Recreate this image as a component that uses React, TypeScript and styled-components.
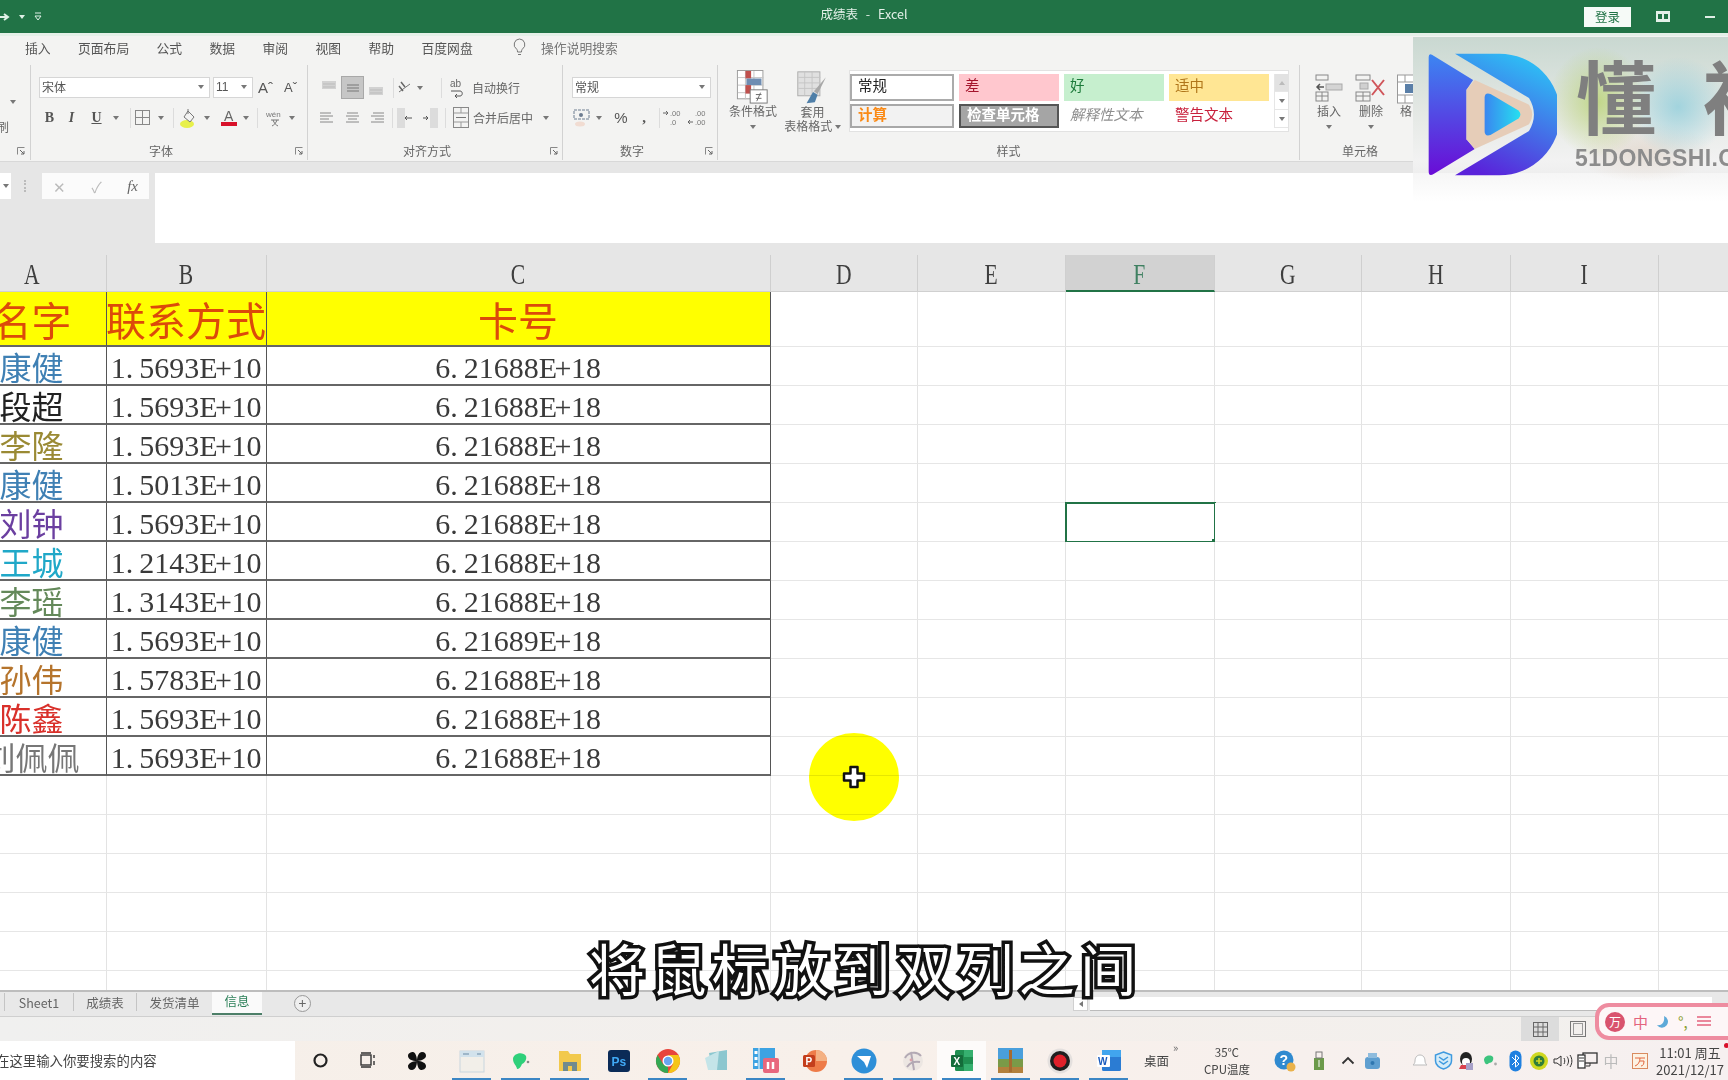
import React from "react";
import styled, { createGlobalStyle } from "styled-components";

const Global = createGlobalStyle`
  html, body { margin: 0; padding: 0; background: #fff; }
  * { box-sizing: border-box; }
`;

const UI = `"Noto Sans CJK SC", "Liberation Sans", sans-serif`;
const COLS = "149px 160px 504px 147px 148px 149px 147px 149px 148px 148px";

const Root = styled.div`
  position: relative;
  width: 1728px;
  height: 1080px;
  overflow: hidden;
  display: flex;
  flex-direction: column;
  font-family: ${UI};
  color: #555;
  filter: blur(0.45px);
`;

/* ---------- title bar ---------- */
const TitleBar = styled.header`
  height: 36px;
  flex: none;
  background: #217346;
  border-bottom: 3px solid #e4f0e8;
  display: grid;
  grid-template-columns: 1fr auto 1fr;
  align-items: center;
  color: #e4f1e9;
`;
const Quick = styled.div`
  display: flex;
  align-items: center;
  gap: 9px;
  padding-left: 0;
`;
const Title = styled.div`
  font-size: 12.5px;
  word-spacing: 5px;
  margin-bottom: 6px;
`;
const TitleRight = styled.div`
  display: flex;
  align-items: center;
  justify-content: flex-end;
  padding-right: 13px;
`;
const Login = styled.div`
  width: 47px;
  height: 20px;
  background: #f6faf7;
  color: #217346;
  font-size: 12.5px;
  display: flex;
  align-items: center;
  justify-content: center;
  margin-right: 25px;
`;
const Minimize = styled.span`
  width: 10px;
  height: 2px;
  background: #dfeee5;
  margin-left: 35px;
`;

/* ---------- menu ---------- */
const MenuRow = styled.nav`
  height: 29px;
  flex: none;
  background: #f3f3f2;
  display: flex;
  align-items: center;
  gap: 27.4px;
  padding: 0 0 7px 25px;
  font-size: 12.8px;
  color: #555;
`;
const Search = styled.div`
  display: flex;
  align-items: center;
  gap: 15px;
  margin-left: 13px;
  font-size: 12.8px;
  color: #777;
`;

/* ---------- ribbon ---------- */
const Ribbon = styled.section`
  height: 97px;
  flex: none;
  background: #f3f3f2;
  display: flex;
  border-bottom: 1px solid #d8d8d8;
`;
const Group = styled.div<{ $w: number; $pad?: number; $line?: boolean }>`
  width: ${(p) => p.$w}px;
  flex: none;
  padding: 12px 0 0 ${(p) => p.$pad ?? 8}px;
  border-right: ${(p) => (p.$line === false ? "none" : "1px solid #d2d2d2")};
  margin-bottom: 1px;
  display: flex;
  flex-direction: column;
  overflow: hidden;
`;
const Line = styled.div<{ $top?: number }>`
  display: flex;
  align-items: center;
  height: 21px;
  margin-top: ${(p) => p.$top ?? 0}px;
`;
const GroupFoot = styled.div<{ $pad?: number }>`
  margin-top: auto;
  margin-left: -${(p) => p.$pad ?? 8}px;
  height: 19px;
  display: flex;
  align-items: center;
  font-size: 12px;
  color: #666;
`;
const GroupLabel = styled.div`
  flex: 1;
  text-align: center;
`;
const Launcher = styled.span`
  width: 16px;
  display: flex;
  justify-content: center;
`;
const DropBox = styled.div<{ $w: number }>`
  width: ${(p) => p.$w}px;
  height: 21px;
  flex: none;
  background: #fff;
  border: 1px solid #d6d6d6;
  display: flex;
  align-items: center;
  justify-content: space-between;
  padding: 0 5px 2px 2px;
  font-size: 12px;
  color: #555;
`;
const Tool = styled.div<{ $w: number; $ml?: number; $on?: boolean }>`
  width: ${(p) => p.$w}px;
  height: ${(p) => (p.$on ? "23px" : "21px")};
  margin-left: ${(p) => p.$ml ?? 0}px;
  flex: none;
  display: flex;
  align-items: center;
  justify-content: center;
  font-size: 13px;
  color: #666;
  background: ${(p) => (p.$on ? "#c6c6c6" : "transparent")};
  border: ${(p) => (p.$on ? "1px solid #a8a8a8" : "none")};
`;
const Face = styled.span<{ $italic?: boolean; $under?: boolean }>`
  font-family: "Liberation Serif", serif;
  font-weight: 700;
  font-size: 14px;
  font-style: ${(p) => (p.$italic ? "italic" : "normal")};
  text-decoration: ${(p) => (p.$under ? "underline" : "none")};
  color: #555;
`;
const Sep = styled.span<{ $ml: number }>`
  width: 1px;
  height: 20px;
  background: #dcdcdc;
  margin-left: ${(p) => p.$ml}px;
  flex: none;
`;
const ToolText = styled.span<{ $ml?: number }>`
  font-size: 12px;
  color: #666;
  margin-left: ${(p) => p.$ml ?? 1}px;
  white-space: nowrap;
`;
const Caret = styled.span<{ $ml?: number }>`
  flex: none;
  width: 0;
  height: 0;
  margin-left: ${(p) => p.$ml ?? 0}px;
  border-left: 3px solid transparent;
  border-right: 3px solid transparent;
  border-top: 4px solid #777;
`;
const StylesBody = styled.div<{ $top?: number }>`
  display: flex;
  align-items: flex-start;
  margin-top: ${(p) => p.$top ?? -7}px;
`;
const BigTool = styled.div<{ $w: number }>`
  width: ${(p) => p.$w}px;
  flex: none;
  display: flex;
  flex-direction: column;
  align-items: center;
  font-size: 12px;
  line-height: 14px;
  color: #666;
  white-space: nowrap;
`;
const BigLabel = styled.span<{ $top: number }>`
  margin-top: ${(p) => p.$top}px;
`;
const BigCaret = styled.div`
  margin-top: 7px;
  display: flex;
  justify-content: center;
`;
const Gallery = styled.div`
  width: 440px;
  height: 62px;
  flex: none;
  background: #fff;
  border: 1px solid #e2e2e2;
  padding: 3px 0 3px 0;
  display: grid;
  grid-template-columns: 104px 100px 100px 100px 14px;
  grid-template-rows: 27px 24px;
  column-gap: 5px;
  row-gap: 3px;
  margin-left: 2px;
`;
const StyleCell = styled.div<{ $bg?: string; $fg: string; $edge?: string; $i?: boolean; $b?: boolean }>`
  background: ${(p) => p.$bg ?? "transparent"};
  color: ${(p) => p.$fg};
  border: ${(p) => p.$edge ?? "none"};
  font-size: 14.5px;
  font-style: ${(p) => (p.$i ? "italic" : "normal")};
  font-weight: ${(p) => (p.$b ? 700 : 400)};
  display: flex;
  align-items: center;
  padding: 0 0 6px 6px;
  white-space: nowrap;
  overflow: hidden;
`;
const GalleryScroll = styled.div`
  grid-column: 5;
  grid-row: 1 / span 2;
  display: flex;
  flex-direction: column;
  border-left: 1px solid #e6e6e6;
`;
const ScrollBtn = styled.div<{ $top?: boolean }>`
  flex: 1;
  display: flex;
  align-items: center;
  justify-content: center;
  background: ${(p) => (p.$top ? "#e2e2e2" : "#fff")};
  border-bottom: 1px solid #e6e6e6;
`;

/* ---------- formula bar ---------- */
const FormulaBar = styled.section`
  height: 93px;
  flex: none;
  background: #e6e6e6;
  padding: 11px 0 11px 0;
  display: flex;
  align-items: flex-start;
`;
const NameStub = styled.div`
  width: 11px;
  height: 26px;
  background: #fff;
  display: flex;
  align-items: center;
  justify-content: center;
`;
const Dots = styled.span`
  margin-left: 13px;
  width: 2px;
  height: 12px;
  margin-top: 7px;
  border-left: 2px dotted #bbb;
`;
const FxBox = styled.div`
  margin-left: 16px;
  width: 107px;
  height: 26px;
  background: #fbfbfb;
  display: flex;
  align-items: center;
  justify-content: space-between;
  padding: 0 11px 0 11px;
  color: #bbb;
  font-size: 15px;
`;
const Fx = styled.i`
  font-family: "Liberation Serif", serif;
  color: #666;
  font-size: 15px;
`;
const FormulaInput = styled.div`
  margin-left: 6px;
  flex: 1;
  height: 70px;
  background: #fff;
`;

/* ---------- sheet ---------- */
const ColumnHead = styled.div`
  height: 37px;
  flex: none;
  margin-left: -42.5px;
  display: grid;
  grid-template-columns: ${COLS};
  background: #e6e6e6;
`;
const ColCell = styled.div<{ $on?: boolean }>`
  display: flex;
  align-items: center;
  justify-content: center;
  padding-top: 2px;
  font-family: "Liberation Serif", serif;
  font-size: 30px;
  line-height: 1;
  color: ${(p) => (p.$on ? "#3f8061" : "#3e3e3e")};
  background: ${(p) => (p.$on ? "#d2d2d2" : "transparent")};
  border-right: 1px solid #cfcfcf;
  border-bottom: ${(p) => (p.$on ? "2px solid #217346" : "1px solid #d0d0d0")};
`;
const ColLetter = styled.span`
  display: inline-block;
  transform: scaleX(0.72);
`;
const Sheet = styled.div`
  flex: 1;
  min-height: 0;
  overflow: hidden;
  margin-left: -42.5px;
  display: grid;
  grid-template-columns: ${COLS};
  grid-template-rows: 55px;
  grid-auto-rows: 39px;
  background: #fff;
`;
const Cell = styled.div<{ $boxed?: boolean; $head?: boolean; $sel?: boolean }>`
  position: relative;
  display: flex;
  align-items: center;
  justify-content: center;
  white-space: nowrap;
  background: ${(p) => (p.$head ? "#ffff00" : "#fff")};
  border-right: ${(p) => (p.$boxed ? "1.5px solid #555" : "1px solid #e3e3e3")};
  border-bottom: ${(p) => (p.$boxed ? "2px solid #666" : "1px solid #e6e6e6")};
  outline: ${(p) => (p.$sel ? "2px solid #217346" : "none")};
  outline-offset: -1px;
  &::after {
    content: ${(p) => (p.$sel ? '""' : "none")};
    position: absolute;
    right: -3px;
    bottom: -3px;
    width: 5px;
    height: 5px;
    background: #217346;
  }
`;
const HeadText = styled.span`
  font-size: 40px;
  line-height: 1;
  color: #dc4a0a;
`;
const NameText = styled.span<{ $c: string }>`
  font-size: 32px;
  line-height: 1;
  color: ${(p) => p.$c};
`;
const NumText = styled.span`
  font-family: "Liberation Serif", serif;
  font-size: 30px;
  line-height: 1;
  color: #3a3a3a;
  margin-top: 4px;
`;
const NumDot = styled.span`
  padding-right: 6px;
`;
const NumExp = styled.span`
  letter-spacing: -2.5px;
  padding-right: 2px;
`;

/* ---------- tabs / status ---------- */
const TabBar = styled.div`
  height: 26px;
  flex: none;
  background: #e8e8e8;
  border-top: 2px solid #bdbdbd;
  display: flex;
  align-items: center;
  font-size: 12.5px;
  color: #666;
`;
const Tab = styled.div<{ $w: number; $on?: boolean; $first?: boolean }>`
  width: ${(p) => p.$w}px;
  flex: none;
  height: ${(p) => (p.$on ? "23px" : "18px")};
  margin-left: ${(p) => (p.$first ? "4px" : "0")};
  margin-top: ${(p) => (p.$on ? "0" : "-4px")};
  padding-bottom: ${(p) => (p.$on ? "4px" : "0")};
  align-self: ${(p) => (p.$on ? "flex-start" : "center")};
  display: flex;
  align-items: center;
  justify-content: center;
  white-space: nowrap;
  background: ${(p) => (p.$on ? "#fafafa" : "transparent")};
  color: ${(p) => (p.$on ? "#2c8059" : "#666")};
  border-bottom: ${(p) => (p.$on ? "2px solid #4d7f68" : "none")};
  border-left: ${(p) => (p.$on ? "none" : "1px solid #c4c4c4")};
`;
const PlusBtn = styled.span`
  margin: -2px 0 0 32px;
  width: 17px;
  height: 17px;
  border-radius: 50%;
  border: 1px solid #999;
  display: flex;
  align-items: center;
  justify-content: center;
  font-size: 14px;
  line-height: 1;
  color: #666;
  background: #efefef;
`;
const HScroll = styled.div`
  margin-left: auto;
  width: 639px;
  margin-right: 16px;
  display: flex;
  align-items: center;
  height: 14px;
  gap: 2px;
`;
const HArrow = styled.div`
  width: 15px;
  height: 14px;
  background: #fff;
  display: flex;
  align-items: center;
  justify-content: center;
  border: 1px solid #d0d0d0;
`;
const HTrack = styled.div`
  flex: 1;
  height: 14px;
  background: #fff;
  border-bottom: 1px solid #bbb;
`;
const StatusBar = styled.div`
  height: 25px;
  flex: none;
  background: linear-gradient(90deg, #f0f0ef 0%, #f4efeb 60%, #f2f0ee 100%);
  border-top: 1px solid #cfcfcf;
  display: flex;
  justify-content: flex-end;
  padding-right: 131px;
`;
const ViewBtn = styled.div<{ $on?: boolean }>`
  width: 38px;
  height: 24px;
  display: flex;
  align-items: center;
  justify-content: center;
  background: ${(p) => (p.$on ? "#dcdcdc" : "transparent")};
`;

/* ---------- taskbar ---------- */
const Taskbar = styled.footer`
  height: 39px;
  flex: none;
  display: flex;
  align-items: stretch;
  background: linear-gradient(90deg, #f5efe9 0%, #f8f0ea 50%, #f6f0f0 100%);
  overflow: hidden;
`;
const SearchBox = styled.div`
  width: 295px;
  flex: none;
  background: #fff;
  display: flex;
  align-items: center;
  padding-bottom: 2px;
  font-size: 13.4px;
  color: #444;
  overflow: hidden;
  white-space: nowrap;
  margin-right: 1px;
`;
const SearchText = styled.span`
  margin-left: -4px;
`;
const AppCell = styled.div<{ $w?: number; $active?: boolean; $front?: boolean; $mr?: number }>`
  position: relative;
  width: ${(p) => p.$w ?? 49}px;
  margin-right: ${(p) => p.$mr ?? 0}px;
  flex: none;
  display: flex;
  align-items: center;
  justify-content: center;
  background: ${(p) => (p.$front ? "#fdfbfa" : "transparent")};
  &::after {
    content: ${(p) => (p.$active ? '""' : "none")};
    position: absolute;
    left: 5px;
    right: 5px;
    bottom: 0;
    height: 2px;
    background: #3b86c4;
  }
`;
const TrayText = styled.div<{ $w: number; $size?: number; $ml?: number }>`
  width: ${(p) => p.$w}px;
  margin-left: ${(p) => p.$ml ?? 0}px;
  flex: none;
  display: flex;
  flex-direction: column;
  align-items: center;
  justify-content: center;
  font-size: ${(p) => p.$size ?? 12}px;
  line-height: 17px;
  color: #444;
  white-space: nowrap;
`;
const Tray = styled.div<{ $w: number; $ml?: number; $muted?: boolean }>`
  width: ${(p) => p.$w}px;
  margin-left: ${(p) => p.$ml ?? 0}px;
  flex: none;
  display: flex;
  align-items: center;
  justify-content: center;
  color: ${(p) => (p.$muted ? "#bbb" : "#555")};
  font-size: 15px;
`;
const More = styled.span`
  font-size: 11px;
  color: #666;
  width: 16px;
  padding-top: 1px;
  margin-left: -7px;
  line-height: 1;
`;

/* ---------- overlays ---------- */
const Watermark = styled.div`
  position: absolute;
  top: 37px;
  left: 1413px;
  width: 315px;
  height: 165px;
  overflow: hidden;
  background:
    radial-gradient(ellipse 50px 55px at 185px 65px, rgba(185, 210, 115, 0.8), transparent),
    radial-gradient(ellipse 50px 50px at 265px 70px, rgba(140, 205, 220, 0.75), transparent),
    radial-gradient(ellipse 70px 30px at 230px 115px, rgba(225, 212, 200, 0.7), transparent),
    linear-gradient(180deg, #c9d8d1 0%, #e4e8e4 45%, #f2f2f2 75%, rgba(255, 255, 255, 0) 100%);
`;
const LogoWrap = styled.div`
  position: absolute;
  left: 14px;
  top: 15px;
`;
const WmTitle = styled.div`
  position: absolute;
  left: 163px;
  top: 6px;
  font-size: 80px;
  font-weight: 700;
  line-height: 100px;
  letter-spacing: 46px;
  color: #7f7f7f;
  white-space: nowrap;
`;
const WmSite = styled.div`
  position: absolute;
  left: 162px;
  top: 108px;
  font-family: "Liberation Sans", sans-serif;
  font-weight: 700;
  font-size: 23px;
  letter-spacing: 0.4px;
  color: #8c8c8c;
  white-space: nowrap;
`;
const Caption = styled.div`
  position: absolute;
  left: 589px;
  top: 926px;
  font-size: 56px;
  line-height: 82px;
  letter-spacing: 5.4px;
  color: #fff;
  -webkit-text-stroke: 7px #111;
  paint-order: stroke fill;
  white-space: nowrap;
`;
const Pointer = styled.div`
  position: absolute;
  left: 809px;
  top: 733px;
  width: 90px;
  height: 88px;
  border-radius: 50%;
  background: #ffff00;
  mix-blend-mode: multiply;
`;
const Cursor = styled.div`
  position: absolute;
  left: 842px;
  top: 765px;
  width: 24px;
  height: 24px;
`;
const ImePill = styled.div`
  position: absolute;
  left: 1595px;
  top: 1003px;
  width: 150px;
  height: 37px;
  border-radius: 14px;
  background: #fdf6f7;
  border: 4px solid #ee8ca0;
  display: flex;
  align-items: center;
  gap: 8px;
  padding-left: 6px;
  color: #e4637d;
  font-size: 15px;
`;
const ImeLogo = styled.span`
  width: 20px;
  height: 20px;
  border-radius: 50%;
  background: #d9536e;
  color: #fff;
  font-size: 12px;
  display: flex;
  align-items: center;
  justify-content: center;
`;
const ImeMark = styled.span`
  color: #8aa030;
`;
const RedDot = styled.span`
  position: absolute;
  left: 1724px;
  top: 1043px;
  width: 5px;
  height: 5px;
  border-radius: 50%;
  background: #d8112a;
`;

/* ---------- icons ---------- */
const Svg: React.FC<{ w: number; h?: number; v?: string; children: React.ReactNode }> = ({ w, h, v, children }) => (
  <svg width={w} height={h ?? w} viewBox={v ?? `0 0 ${w} ${h ?? w}`} fill="none" style={{ display: "block" }}>
    {children}
  </svg>
);
const LaunchIcon = () => (
  <Svg w={8}>
    <path d="M.5 7.5v-7h7" stroke="#888" />
    <path d="M3 3l4 4M4 7h3V4" stroke="#666" />
  </Svg>
);
const Bars = ({ y, sel }: { y: number; sel?: boolean }) => (
  <Svg w={16}>
    {sel ? (
      <path d="M2 5h12M2 8h12M2 11h12" stroke="#777" />
    ) : (
      <rect x="1" y={y} width="14" height="8" fill="#d2d2d2" />
    )}
    {!sel && <path d={`M2 ${y + 3}h12M2 ${y + 6}h12`} stroke="#bbb" />}
  </Svg>
);
const AlignIcon = ({ k }: { k: "l" | "c" | "r" }) => {
  const a = k === "l" ? [1, 1, 1, 1] : k === "c" ? [2, 1, 3, 1] : [3, 1, 5, 1];
  return (
    <Svg w={15}>
      <path d={`M${a[0]} 3h11M${a[1]} 6h13M${a[2]} 9h9M${a[3]} 12h13`} stroke="#888" />
    </Svg>
  );
};
const IndentIcon = ({ flip }: { flip?: boolean }) => (
  <Svg w={17} h={20}>
    <rect x={flip ? 9 : 0} y="0" width="8" height="20" fill="#dcdcdc" />
    <path d={flip ? "M2 10h5M5 8l2 2-2 2" : "M15 10h-7M10 8l-2 2 2 2"} stroke="#555" />
  </Svg>
);
const OrientIcon = () => (
  <Svg w={18}>
    <path d="M3 13L14 5" stroke="#777" />
    <path d="M5 3l4 5M3 7l4 5" stroke="#666" strokeWidth="1.5" />
  </Svg>
);
const WrapIcon = () => (
  <Svg w={16} h={20}>
    <text x="1" y="9" fontSize="10" fill="#666" fontFamily="Liberation Sans">ab</text>
    <path d="M2 13h9c3 0 3 5 0 5H6M8 16l-2 2 2 2" stroke="#555" />
  </Svg>
);
const MergeIcon = () => (
  <Svg w={17} h={21}>
    <rect x=".5" y=".5" width="15" height="20" stroke="#888" />
    <path d="M1 6h14M1 15h14M8 1v5M8 15v5" stroke="#999" />
    <path d="M3 10.5h10" stroke="#777" />
  </Svg>
);
const BorderIcon = () => (
  <Svg w={16}>
    <rect x=".5" y=".5" width="14" height="14" stroke="#888" />
    <path d="M7.5 1v14M1 7.5h14" stroke="#888" />
  </Svg>
);
const FillIcon = () => (
  <Svg w={20}>
    <ellipse cx="7" cy="16" rx="7" ry="4" fill="#e7f04a" />
    <path d="M8 3l6 6-4 5-6-5z" fill="#f3f3f2" stroke="#777" />
    <path d="M8 1v5" stroke="#777" />
  </Svg>
);
const FontColorIcon = () => (
  <Svg w={18}>
    <text x="4" y="12" fontSize="14" fill="#666" fontFamily="Liberation Sans">A</text>
    <rect x="1" y="13" width="16" height="4" fill="#d8112a" />
  </Svg>
);
const WenIcon = () => (
  <Svg w={18}>
    <text x="0" y="8" fontSize="8" fill="#777" fontFamily="Liberation Sans">wén</text>
    <path d="M5 11h8M7 11c1 3 3 5 5 6M11 11c-1 3-3 5-5 6" stroke="#777" />
  </Svg>
);
const AccountIcon = () => (
  <Svg w={18}>
    <rect x="1" y="1" width="15" height="9" stroke="#6d7c90" strokeDasharray="3 1" />
    <circle cx="8" cy="6" r="2" fill="#6d7c90" />
    <ellipse cx="7" cy="15" rx="5" ry="2.5" fill="#f1dcd2" />
  </Svg>
);
const DecIcon = ({ more }: { more?: boolean }) => (
  <Svg w={18}>
    <text x="7" y="7" fontSize="7.5" fill="#777" fontFamily="Liberation Sans">.00</text>
    <text x="7" y="16" fontSize="7.5" fill="#777" fontFamily="Liberation Sans">{more ? ".0" : ".00"}</text>
    <path d={more ? "M0 4h5M3 2l2 2-2 2" : "M5 13H0M2 11l-2 2 2 2"} stroke="#666" />
  </Svg>
);
const CondIcon = () => (
  <Svg w={34} h={34} v="0 0 34 36">
    <rect x=".5" y=".5" width="27" height="30" fill="#fff" stroke="#9a9a9a" />
    <path d="M9 1v30M18 1v30M1 8h27M1 16h27M1 24h27" stroke="#c4c4c4" />
    <rect x="9" y="1" width="6" height="8" fill="#c0504d" />
    <rect x="10" y="9" width="16" height="7" fill="#6f8db2" />
    <rect x="9" y="16" width="6" height="9" fill="#c0504d" />
    <rect x="14" y="21" width="18" height="14" fill="#fff" stroke="#777" />
    <path d="M20 26h6M20 30h6M25 24l-4 9" stroke="#666" />
  </Svg>
);
const TableIcon = () => (
  <Svg w={34} h={35} v="0 0 34 38">
    <rect x=".5" y="2" width="24" height="26" fill="#e0e0e0" stroke="#aaa" />
    <path d="M8 2v26M16 2v26M1 8h24M1 14h24M1 20h24" stroke="#c4c4c4" />
    <path d="M31 8L22 26l-4-3z" fill="#a8a8a8" />
    <path d="M17 24l5 3-3 8-9 1z" fill="#4f7fa8" />
  </Svg>
);
const InsertIcon = () => (
  <Svg w={28} h={28}>
    <rect x="1" y="1" width="12" height="5" stroke="#888" />
    <rect x="1" y="18" width="12" height="9" stroke="#888" />
    <path d="M7 18v9M1 22h12" stroke="#888" />
    <rect x="11" y="10" width="16" height="6" fill="#d4d4d4" stroke="#aaa" />
    <path d="M9 13H2M5 10l-3 3 3 3" stroke="#555" strokeWidth="1.5" />
  </Svg>
);
const DeleteIcon = () => (
  <Svg w={32} h={28}>
    <rect x="1" y="1" width="14" height="5" stroke="#888" />
    <rect x="1" y="18" width="14" height="9" stroke="#888" />
    <path d="M8 18v9M1 22h14" stroke="#888" />
    <rect x="5" y="9" width="8" height="6" fill="#d0d0d0" stroke="#aaa" />
    <path d="M17 6l12 15M29 6L17 21" stroke="#d0555a" strokeWidth="2" />
  </Svg>
);
const FormatIcon = () => (
  <Svg w={18} h={30}>
    <rect x=".5" y="1" width="16" height="28" fill="#fff" stroke="#999" />
    <rect x="8" y="10" width="8" height="9" fill="#5a7fa8" />
    <path d="M1 8h15M1 21h15M8 1v7M8 21v8" stroke="#999" />
  </Svg>
);
const Logo = () => (
  <svg width="130" height="125" viewBox="140 150 395 380" style={{ display: "block" }}>
    <defs>
      <linearGradient id="lgA" x1="0" y1="0" x2="0" y2="1">
        <stop offset="0" stopColor="#3c86f2" />
        <stop offset="1" stopColor="#6a0cd6" />
      </linearGradient>
      <linearGradient id="lgB" x1="0.7" y1="0" x2="0.3" y2="1">
        <stop offset="0" stopColor="#2cc4f6" />
        <stop offset="1" stopColor="#5a22da" />
      </linearGradient>
      <linearGradient id="lgC" x1="0" y1="0" x2="1" y2="0">
        <stop offset="0" stopColor="#3a86f0" />
        <stop offset="1" stopColor="#26e0f0" />
      </linearGradient>
    </defs>
    <path d="M145 165q0-12 10-7L280 235l-20 30v150l25 30-125 76q-15 8-15-8z" fill="url(#lgA)" />
    <path d="M225 155h135a185 185 0 0 1 0 370H225l225-135q30-50 0-100z" fill="url(#lgB)" />
    <path d="M285 235l165 75q20 30 0 60L285 445l-25-30V265z" fill="#e6cdb8" />
    <path d="M315 290q0-18 18-12l85 50q12 12 0 24l-85 50q-18 6-18-12z" fill="url(#lgC)" />
  </svg>
);

const Ic = {
  Bird: () => (
    <Svg w={24}>
      <path d="M4 10c0-6 10-8 13-3 1 3-1 7-4 8-1 3-3 5-5 5 0-3-4-5-4-10z" fill="#2fd07a" />
      <circle cx="19" cy="13" r="1.3" fill="#888" />
    </Svg>
  ),
  Window: () => (
    <Svg w={26}>
      <rect x="1" y="3" width="24" height="21" fill="#f2efe9" stroke="#c9d6de" />
      <rect x="1" y="3" width="24" height="6" fill="#d2e2ec" />
      <path d="M4 6h6M18 6h4" stroke="#6a8aa5" />
    </Svg>
  ),
  Folder: () => (
    <Svg w={26}>
      <path d="M2 3h9l2 3h11v17H2z" fill="#f2c94c" />
      <rect x="6" y="14" width="14" height="9" fill="#6f8b8f" />
      <rect x="11" y="18" width="4" height="5" fill="#f2c94c" />
    </Svg>
  ),
  Ps: () => (
    <Svg w={24}>
      <rect x="1" y="1" width="22" height="22" rx="3" fill="#0b2b57" />
      <text x="4.5" y="17" fontSize="12" fontWeight="700" fill="#40a9f5" fontFamily="Liberation Sans">Ps</text>
    </Svg>
  ),
  Chrome: () => (
    <Svg w={26}>
      <circle cx="13" cy="13" r="12" fill="#e8453c" />
      <path d="M13 25a12 12 0 0 1-10.4-18L8 16l5 3z" fill="#34a853" />
      <path d="M13 25a12 12 0 0 0 10.4-18L13 7l5 9z" fill="#f5c518" />
      <circle cx="13" cy="13" r="5.5" fill="#fff" />
      <circle cx="13" cy="13" r="4.2" fill="#6aa6ef" />
    </Svg>
  ),
  Note: () => (
    <Svg w={26}>
      <path d="M5 5l18-3v20H8z" fill="#8cc7cf" />
      <path d="M1 10l14-7-2 19H4z" fill="#c4e4e8" />
    </Svg>
  ),
  Film: () => (
    <Svg w={28}>
      <rect x="1" y="1" width="22" height="21" fill="#3ea3e2" />
      <path d="M7 1v21" stroke="#fff" />
      <rect x="2.5" y="4" width="3" height="3" fill="#fff" />
      <rect x="2.5" y="10" width="3" height="3" fill="#fff" />
      <rect x="2.5" y="16" width="3" height="3" fill="#fff" />
      <rect x="11" y="11" width="16" height="15" rx="2" fill="#e8677d" />
      <path d="M16 15v7M21 15v7" stroke="#fff" strokeWidth="2.5" />
    </Svg>
  ),
  Ppt: () => (
    <Svg w={26}>
      <circle cx="14" cy="13" r="11" fill="#ee7b48" />
      <path d="M14 13V2a11 11 0 0 1 11 11z" fill="#f4b183" />
      <rect x="1" y="7" width="12" height="12" rx="1.5" fill="#c43e1c" />
      <text x="3.5" y="16.5" fontSize="10" fontWeight="700" fill="#fff" fontFamily="Liberation Sans">P</text>
    </Svg>
  ),
  Plane: () => (
    <Svg w={26}>
      <circle cx="13" cy="13" r="12.5" fill="#2e8fd8" />
      <path d="M6 8l14 0-4 12-3-6z" fill="#fff" />
    </Svg>
  ),
  Anime: () => (
    <Svg w={26}>
      <circle cx="13" cy="13" r="10" fill="#ece6e2" />
      <path d="M5 10c3-6 12-7 16-2M7 19c3-4 6-6 13-5M11 4l3 18" stroke="#b3a9b4" strokeWidth="2" />
      <circle cx="11" cy="12" r="1.4" fill="#d8a0a8" />
    </Svg>
  ),
  Excel: () => (
    <Svg w={24}>
      <rect x="5" y="1" width="18" height="21" rx="1.5" fill="#1f8f50" />
      <path d="M14 1h9v7h-9zM14 15h9v7h-9z" fill="#36b06f" />
      <rect x="1" y="6" width="12" height="12" rx="1" fill="#146c3a" />
      <text x="3.5" y="15.5" fontSize="10" fontWeight="700" fill="#fff" fontFamily="Liberation Sans">X</text>
    </Svg>
  ),
  Photo: () => (
    <Svg w={25}>
      <rect x="0" y="0" width="25" height="11" fill="#4a9fdc" />
      <rect x="0" y="11" width="25" height="14" fill="#7a9a48" />
      <rect x="0" y="19" width="25" height="6" fill="#b3803c" />
      <rect x="11" y="2" width="3" height="22" fill="#a56b30" />
    </Svg>
  ),
  Rec: () => (
    <Svg w={26}>
      <circle cx="13" cy="13" r="12.5" fill="#e4e0de" />
      <circle cx="13" cy="13" r="10" fill="#1f1f1f" />
      <circle cx="13" cy="13" r="6.5" fill="#e0202a" />
    </Svg>
  ),
  Word: () => (
    <Svg w={26}>
      <rect x="6" y="2" width="19" height="21" rx="1.5" fill="#2b7cd3" />
      <rect x="6" y="2" width="19" height="7" fill="#41a5ee" />
      <rect x="1" y="7" width="13" height="12" rx="1" fill="#fff" />
      <text x="2" y="17" fontSize="10" fontWeight="700" fill="#185abd" fontFamily="Liberation Sans">W</text>
    </Svg>
  ),
};

const ROWS: [string, string, string, string][] = [
  ["康健", "#3f80b4", "5693", "21688"],
  ["段超", "#222222", "5693", "21688"],
  ["李隆", "#9a8a34", "5693", "21688"],
  ["康健", "#3f80b4", "5013", "21688"],
  ["刘钟", "#6b3fa0", "5693", "21688"],
  ["王城", "#20a8c8", "2143", "21688"],
  ["李瑶", "#64895a", "3143", "21688"],
  ["康健", "#3f80b4", "5693", "21689"],
  ["孙伟", "#b5742c", "5783", "21688"],
  ["陈鑫", "#d9302a", "5693", "21688"],
  ["刘佩佩", "#777777", "5693", "21688"],
];
const LETTERS = ["A", "B", "C", "D", "E", "F", "G", "H", "I", "J"];
const EMPTY = [3, 4, 5, 6, 7, 8, 9];
const MENU = ["插入", "页面布局", "公式", "数据", "审阅", "视图", "帮助", "百度网盘"];

const Sci: React.FC<{ lead: string; mant: string; exp: string }> = ({ lead, mant, exp }) => (
  <NumText>
    {lead}
    <NumDot>.</NumDot>
    {mant}
    <NumExp>E+</NumExp>
    {exp}
  </NumText>
);

const App: React.FC = () => (
  <Root>
    <Global />
    <TitleBar>
      <Quick>
        <Svg w={10} h={10}>
          <path d="M0 5h7M4 2l4 3-4 3" stroke="#dff0e6" strokeWidth="2" />
        </Svg>
        <Caret style={{ borderTopColor: "#dff0e6" }} />
        <Svg w={8} h={10}>
          <path d="M1 1h6M1 4l3 4 3-4z" stroke="#dff0e6" />
        </Svg>
      </Quick>
      <Title>成绩表 - Excel</Title>
      <TitleRight>
        <Login>登录</Login>
        <Svg w={14} h={11}>
          <rect x=".5" y=".5" width="13" height="10" stroke="#e4f1e9" fill="#e4f1e9" />
          <rect x="2" y="3" width="4" height="5" fill="#217346" />
          <rect x="8" y="3" width="4" height="5" fill="#217346" />
        </Svg>
        <Minimize />
      </TitleRight>
    </TitleBar>

    <MenuRow>
      {MENU.map((m) => (
        <span key={m}>{m}</span>
      ))}
      <Search>
        <Svg w={13} h={18}>
          <path d="M6.5 1a5.5 5.5 0 0 0-3 10c.7.7 1 1.5 1 3h4c0-1.5.3-2.3 1-3a5.5 5.5 0 0 0-3-10zM5 16.500h3" stroke="#777" />
        </Svg>
        操作说明搜索
      </Search>
    </MenuRow>

    <Ribbon>
      <Group $w={31} $pad={0}>
        <Line $top={14} style={{ justifyContent: "flex-end", paddingRight: 14 }}>
          <Caret />
        </Line>
        <Line $top={4}>
          <ToolText $ml={-3}>刷</ToolText>
        </Line>
        <GroupFoot $pad={0} style={{ justifyContent: "flex-end", paddingRight: 1 }}>
          <Launcher>
            <LaunchIcon />
          </Launcher>
        </GroupFoot>
      </Group>

      <Group $w={277}>
        <Line>
          <DropBox $w={171}>
            宋体
            <Caret />
          </DropBox>
          <DropBox $w={40} style={{ marginLeft: 3, fontFamily: "Liberation Sans" }}>
            11
            <Caret />
          </DropBox>
          <Tool $w={25}>
            <Face style={{ fontWeight: 400, fontFamily: "Liberation Sans", fontSize: 15 }}>Aˆ</Face>
          </Tool>
          <Tool $w={25}>
            <Face style={{ fontWeight: 400, fontFamily: "Liberation Sans", fontSize: 13 }}>Aˇ</Face>
          </Tool>
        </Line>
        <Line $top={9}>
          <Tool $w={21}>
            <Face>B</Face>
          </Tool>
          <Tool $w={23}>
            <Face $italic>I</Face>
          </Tool>
          <Tool $w={27}>
            <Face $under>U</Face>
          </Tool>
          <Tool $w={12}>
            <Caret />
          </Tool>
          <Sep $ml={8} />
          <Tool $w={20} $ml={2}>
            <BorderIcon />
          </Tool>
          <Tool $w={15}>
            <Caret />
          </Tool>
          <Sep $ml={5} />
          <Tool $w={24} $ml={4}>
            <FillIcon />
          </Tool>
          <Tool $w={10}>
            <Caret />
          </Tool>
          <Tool $w={24} $ml={5}>
            <FontColorIcon />
          </Tool>
          <Tool $w={10}>
            <Caret />
          </Tool>
          <Sep $ml={6} />
          <Tool $w={24} $ml={5}>
            <WenIcon />
          </Tool>
          <Tool $w={10}>
            <Caret />
          </Tool>
        </Line>
        <GroupFoot>
          <GroupLabel>字体</GroupLabel>
          <Launcher>
            <LaunchIcon />
          </Launcher>
        </GroupFoot>
      </Group>

      <Group $w={255}>
        <Line>
          <Tool $w={25}>
            <Bars y={1} />
          </Tool>
          <Tool $w={23} $on>
            <Bars y={4} sel />
          </Tool>
          <Tool $w={24}>
            <Bars y={7} />
          </Tool>
          <Sep $ml={5} />
          <Tool $w={22} $ml={0}>
            <OrientIcon />
          </Tool>
          <Caret $ml={1} />
          <Sep $ml={18} />
          <Tool $w={22} $ml={4}>
            <WrapIcon />
          </Tool>
          <ToolText $ml={4}>自动换行</ToolText>
        </Line>
        <Line $top={9}>
          <Tool $w={20}>
            <AlignIcon k="l" />
          </Tool>
          <Tool $w={26} $ml={3}>
            <AlignIcon k="c" />
          </Tool>
          <Tool $w={20} $ml={2}>
            <AlignIcon k="r" />
          </Tool>
          <Sep $ml={5} />
          <Tool $w={20} $ml={2}>
            <IndentIcon />
          </Tool>
          <Tool $w={22} $ml={3}>
            <IndentIcon flip />
          </Tool>
          <Sep $ml={5} />
          <Tool $w={20} $ml={5}>
            <MergeIcon />
          </Tool>
          <ToolText $ml={2}>合并后居中</ToolText>
          <Caret $ml={10} />
        </Line>
        <GroupFoot>
          <GroupLabel>对齐方式</GroupLabel>
          <Launcher>
            <LaunchIcon />
          </Launcher>
        </GroupFoot>
      </Group>

      <Group $w={155} $pad={9}>
        <Line>
          <DropBox $w={139}>
            常规
            <Caret />
          </DropBox>
        </Line>
        <Line $top={9}>
          <Tool $w={20}>
            <AccountIcon />
          </Tool>
          <Tool $w={14}>
            <Caret />
          </Tool>
          <Tool $w={20} $ml={5}>
            <Face style={{ fontFamily: "Liberation Sans", fontWeight: 400, fontSize: 15 }}>%</Face>
          </Tool>
          <Tool $w={20} $ml={3}>
            <Face style={{ fontSize: 15 }}>,</Face>
          </Tool>
          <Sep $ml={5} />
          <Tool $w={20} $ml={2}>
            <DecIcon more />
          </Tool>
          <Tool $w={20} $ml={5}>
            <DecIcon />
          </Tool>
        </Line>
        <GroupFoot $pad={9}>
          <GroupLabel>数字</GroupLabel>
          <Launcher>
            <LaunchIcon />
          </Launcher>
        </GroupFoot>
      </Group>

      <Group $w={582} $pad={10}>
        <StylesBody>
          <BigTool $w={50}>
            <CondIcon />
            条件格式
            <BigCaret>
              <Caret />
            </BigCaret>
          </BigTool>
          <BigTool $w={69}>
            <TableIcon />
            套用
            <span>
              表格格式 <Caret style={{ display: "inline-block", verticalAlign: 2 }} />
            </span>
          </BigTool>
          <Gallery>
            <StyleCell $bg="#fff" $fg="#222" $edge="2px solid #ababab">常规</StyleCell>
            <StyleCell $bg="#ffc7ce" $fg="#a4142c">差</StyleCell>
            <StyleCell $bg="#c6efce" $fg="#1c7a3a">好</StyleCell>
            <StyleCell $bg="#ffe694" $fg="#b0761a">适中</StyleCell>
            <GalleryScroll>
              <ScrollBtn $top>
                <Caret style={{ transform: "rotate(180deg)", borderTopColor: "#bbb" }} />
              </ScrollBtn>
              <ScrollBtn>
                <Caret />
              </ScrollBtn>
              <ScrollBtn>
                <Caret />
              </ScrollBtn>
            </GalleryScroll>
            <StyleCell $bg="#f2f2f2" $fg="#fa8a16" $edge="2px solid #a8a8a8" $b>计算</StyleCell>
            <StyleCell $bg="#a5a5a5" $fg="#fff" $edge="2px solid #555" $b>检查单元格</StyleCell>
            <StyleCell $fg="#8f8f8f" $i>解释性文本</StyleCell>
            <StyleCell $fg="#c8203c">警告文本</StyleCell>
          </Gallery>
        </StylesBody>
        <GroupFoot $pad={10}>
          <GroupLabel>样式</GroupLabel>
        </GroupFoot>
      </Group>

      <Group $w={120} $pad={7} $line={false}>
        <StylesBody $top={-3}>
          <BigTool $w={44}>
            <InsertIcon />
            <BigLabel $top={2}>插入</BigLabel>
            <BigCaret>
              <Caret />
            </BigCaret>
          </BigTool>
          <BigTool $w={40}>
            <DeleteIcon />
            <BigLabel $top={2}>删除</BigLabel>
            <BigCaret>
              <Caret />
            </BigCaret>
          </BigTool>
          <BigTool $w={30}>
            <FormatIcon />
            <BigLabel $top={0}>格</BigLabel>
          </BigTool>
        </StylesBody>
        <GroupFoot $pad={7}>
          <GroupLabel>单元格</GroupLabel>
        </GroupFoot>
      </Group>
    </Ribbon>

    <FormulaBar>
      <NameStub>
        <Caret />
      </NameStub>
      <Dots />
      <FxBox>
        <span>✕</span>
        <span>✓</span>
        <Fx>fx</Fx>
      </FxBox>
      <FormulaInput />
    </FormulaBar>

    <ColumnHead>
      {LETTERS.map((l) => (
        <ColCell key={l} $on={l === "F"}>
          <ColLetter>{l}</ColLetter>
        </ColCell>
      ))}
    </ColumnHead>

    <Sheet>
      <Cell $boxed $head>
        <HeadText>名字</HeadText>
      </Cell>
      <Cell $boxed $head>
        <HeadText>联系方式</HeadText>
      </Cell>
      <Cell $boxed $head>
        <HeadText>卡号</HeadText>
      </Cell>
      {EMPTY.map((c) => (
        <Cell key={c} />
      ))}
      {ROWS.map(([name, color, phone, card], r) => (
        <React.Fragment key={r}>
          <Cell $boxed>
            <NameText $c={color}>{name}</NameText>
          </Cell>
          <Cell $boxed>
            <Sci lead="1" mant={phone} exp="10" />
          </Cell>
          <Cell $boxed>
            <Sci lead="6" mant={card} exp="18" />
          </Cell>
          {EMPTY.map((c) => (
            <Cell key={c} $sel={r === 4 && c === 5} />
          ))}
        </React.Fragment>
      ))}
      {[0, 1, 2, 3, 4, 5].flatMap((r) =>
        LETTERS.map((l) => <Cell key={`${r}${l}`} />)
      )}
    </Sheet>

    <TabBar>
      <Tab $w={69} $first>Sheet1</Tab>
      <Tab $w={63}>成绩表</Tab>
      <Tab $w={76}>发货清单</Tab>
      <Tab $w={50} $on>信息</Tab>
      <PlusBtn>+</PlusBtn>
      <HScroll>
        <HArrow>
          <Caret style={{ transform: "rotate(90deg)" }} />
        </HArrow>
        <HTrack />
      </HScroll>
    </TabBar>

    <StatusBar>
      <ViewBtn $on>
        <Svg w={15}>
          <rect x=".5" y=".5" width="14" height="14" stroke="#666" />
          <path d="M5 1v14M10 1v14M1 5h14M1 10h14" stroke="#666" />
        </Svg>
      </ViewBtn>
      <ViewBtn>
        <Svg w={16}>
          <rect x=".5" y=".5" width="15" height="15" stroke="#777" />
          <rect x="3.5" y="2.500" width="9" height="11" stroke="#999" />
        </Svg>
      </ViewBtn>
    </StatusBar>

    <Taskbar>
      <SearchBox>
        <SearchText>在这里输入你要搜索的内容</SearchText>
      </SearchBox>
      <AppCell $w={48}>
        <Svg w={15}>
          <circle cx="7.500" cy="7.500" r="6" stroke="#222" strokeWidth="2.2" />
        </Svg>
      </AppCell>
      <AppCell $w={48}>
        <Svg w={17}>
          <rect x="1" y="3" width="10" height="10" stroke="#333" strokeWidth="1.4" />
          <path d="M1 1h10M1 15h10M14 3v3M14 9v4" stroke="#333" strokeWidth="1.4" />
        </Svg>
      </AppCell>
      <AppCell $w={49} $mr={6}>
        <Svg w={20}>
          <path d="M10 10C5 10 1 8 1 5s3-4 5-4 4 4 4 9zM10 10c0-5 2-9 5-9s4 2 4 4-4 5-9 5zM10 10c5 0 9 2 9 5s-3 4-5 4-4-4-4-9zM10 10c0 5-2 9-5 9s-4-2-4-4 4-5 9-5z" fill="#111" />
        </Svg>
      </AppCell>
      <AppCell $active><Ic.Window /></AppCell>
      <AppCell $active><Ic.Bird /></AppCell>
      <AppCell $active><Ic.Folder /></AppCell>
      <AppCell><Ic.Ps /></AppCell>
      <AppCell $active><Ic.Chrome /></AppCell>
      <AppCell><Ic.Note /></AppCell>
      <AppCell $active><Ic.Film /></AppCell>
      <AppCell><Ic.Ppt /></AppCell>
      <AppCell $active><Ic.Plane /></AppCell>
      <AppCell $active><Ic.Anime /></AppCell>
      <AppCell $active $front><Ic.Excel /></AppCell>
      <AppCell $active><Ic.Photo /></AppCell>
      <AppCell $active><Ic.Rec /></AppCell>
      <AppCell $active><Ic.Word /></AppCell>
      <TrayText $w={47} $size={12.5}>桌面</TrayText>
      <More>»</More>
      <TrayText $w={62} $size={11.5} $ml={14}>
        <span>35℃</span>
        <span>CPU温度</span>
      </TrayText>
      <Tray $w={54}>
        <Svg w={22}>
          <circle cx="10" cy="10" r="9.500" fill="#2f8ad0" />
          <text x="5.500" y="15" fontSize="14" fontWeight="700" fill="#fff" fontFamily="Liberation Sans">?</text>
          <circle cx="17" cy="17" r="4.500" fill="#eab24a" />
        </Svg>
      </Tray>
      <Tray $w={14}>
        <Svg w={12} h={20}>
          <rect x="1" y="7" width="10" height="12" fill="#6b9a4a" />
          <rect x="3" y="1" width="6" height="6" stroke="#777" />
          <path d="M6 9v7" stroke="#fff" />
        </Svg>
      </Tray>
      <Tray $w={30} $ml={7}>
        <Svg w={14} h={9}>
          <path d="M1.500 7.500L7 2l5.500 5.500" stroke="#333" strokeWidth="1.800" />
        </Svg>
      </Tray>
      <Tray $w={18}>
        <Svg w={17} h={18}>
          <rect x="1" y="5" width="15" height="12" rx="3" fill="#5f9fd0" />
          <rect x="4" y="1" width="9" height="5" fill="#8fbcdd" />
          <circle cx="8.500" cy="11" r="2" fill="#2f77b0" />
        </Svg>
      </Tray>
      <Tray $w={24} $ml={27}>
        <Svg w={16}>
          <path d="M8 2c-3.500 0-5 3-5 6 0 2-1 3-2 4h14c-1-1-2-2-2-4 0-3-1.500-6-5-6z" fill="#fff" stroke="#bbb" />
        </Svg>
      </Tray>
      <Tray $w={23}>
        <Svg w={19}>
          <path d="M9.500 1l8 3v6c0 4-4 7-8 8-4-1-8-4-8-8V4z" fill="#d6ecf8" stroke="#3f9adf" strokeWidth="1.500" />
          <path d="M5 6l4.500 3L14 6M5 10l4.500 3 4.500-3" stroke="#3f9adf" strokeWidth="1.500" />
        </Svg>
      </Tray>
      <Tray $w={23}>
        <Svg w={17} h={20}>
          <ellipse cx="8" cy="8" rx="6" ry="7" fill="#222" />
          <ellipse cx="8" cy="11" rx="4" ry="4" fill="#fff" />
          <path d="M3 14l-2 4h14l-2-4z" fill="#d9414e" />
          <rect x="8" y="12" width="7" height="7" fill="#a7a0c8" />
        </Svg>
      </Tray>
      <Tray $w={23}>
        <Svg w={16}>
          <path d="M2 7c0-4 6-6 9-3 1 3-1 6-4 6-2 2-4 2-5-3z" fill="#3dc47e" />
          <circle cx="13.500" cy="11" r="1.400" fill="#aaa" />
        </Svg>
      </Tray>
      <Tray $w={24} $ml={2}>
        <Svg w={13} h={22}>
          <rect x=".5" y=".5" width="12" height="21" rx="6" fill="#1f80e0" />
          <path d="M3 7l7 7-3.500 3V5L10 8l-7 7" stroke="#fff" />
        </Svg>
      </Tray>
      <Tray $w={24}>
        <Svg w={20}>
          <circle cx="10" cy="10" r="9" fill="#cfd820" />
          <circle cx="10" cy="10" r="5.500" fill="#2f7d3a" />
          <path d="M7 10h6M10 7v6" stroke="#cfd820" strokeWidth="1.600" />
        </Svg>
      </Tray>
      <Tray $w={24}>
        <Svg w={20} h={14}>
          <path d="M1 5h3l4-3v10l-4-3H1z" stroke="#333" />
          <path d="M11 4c1 2 1 4 0 6M14 2.500c2 3 2 6 0 9M17 1c2.500 4 2.500 8 0 12" stroke="#333" />
        </Svg>
      </Tray>
      <Tray $w={25}>
        <Svg w={21} h={17}>
          <rect x="6" y="1" width="14" height="10" stroke="#333" strokeWidth="1.300" />
          <rect x="1" y="3" width="7" height="13" fill="#fff" stroke="#333" strokeWidth="1.300" />
          <path d="M2 6h5M2 9h5M13 11v3h-4" stroke="#333" />
        </Svg>
      </Tray>
      <Tray $w={22} $muted>中</Tray>
      <Tray $w={24} $ml={6}>
        <Svg w={16}>
          <rect x=".5" y=".5" width="15" height="15" fill="#fdf2e2" stroke="#d98b5f" />
          <path d="M3 5h10M8 5c0 4-2 7-5 8M8 8h4c0 3-1 5-3 5" stroke="#e2663e" />
        </Svg>
      </Tray>
      <TrayText $w={76} $size={13}>
        <span>11:01 周五</span>
        <span>2021/12/17</span>
      </TrayText>
    </Taskbar>

    <Watermark>
      <LogoWrap>
        <Logo />
      </LogoWrap>
      <WmTitle>懂视</WmTitle>
      <WmSite>51DONGSHI.COM</WmSite>
    </Watermark>
    <Pointer />
    <Cursor>
      <Svg w={24}>
        <path d="M8.500 2h7v6.500H22v7h-6.500V22h-7v-6.500H2v-7h6.500z" fill="#fff" stroke="#111" strokeWidth="2.500" strokeLinejoin="round" />
      </Svg>
    </Cursor>
    <Caption>将鼠标放到双列之间</Caption>
    <ImePill>
      <ImeLogo>万</ImeLogo>
      <span>中</span>
      <Svg w={14}>
        <path d="M8 1a6 6 0 1 1-7 9c5 1 8-3 7-9z" fill="#5da9d8" />
      </Svg>
      <ImeMark>°,</ImeMark>
      <Svg w={16} h={13}>
        <path d="M1 2h14M1 6h14M1 10h14" stroke="#e4637d" strokeWidth="1.500" />
      </Svg>
    </ImePill>
    <RedDot />
  </Root>
);

export default App;
